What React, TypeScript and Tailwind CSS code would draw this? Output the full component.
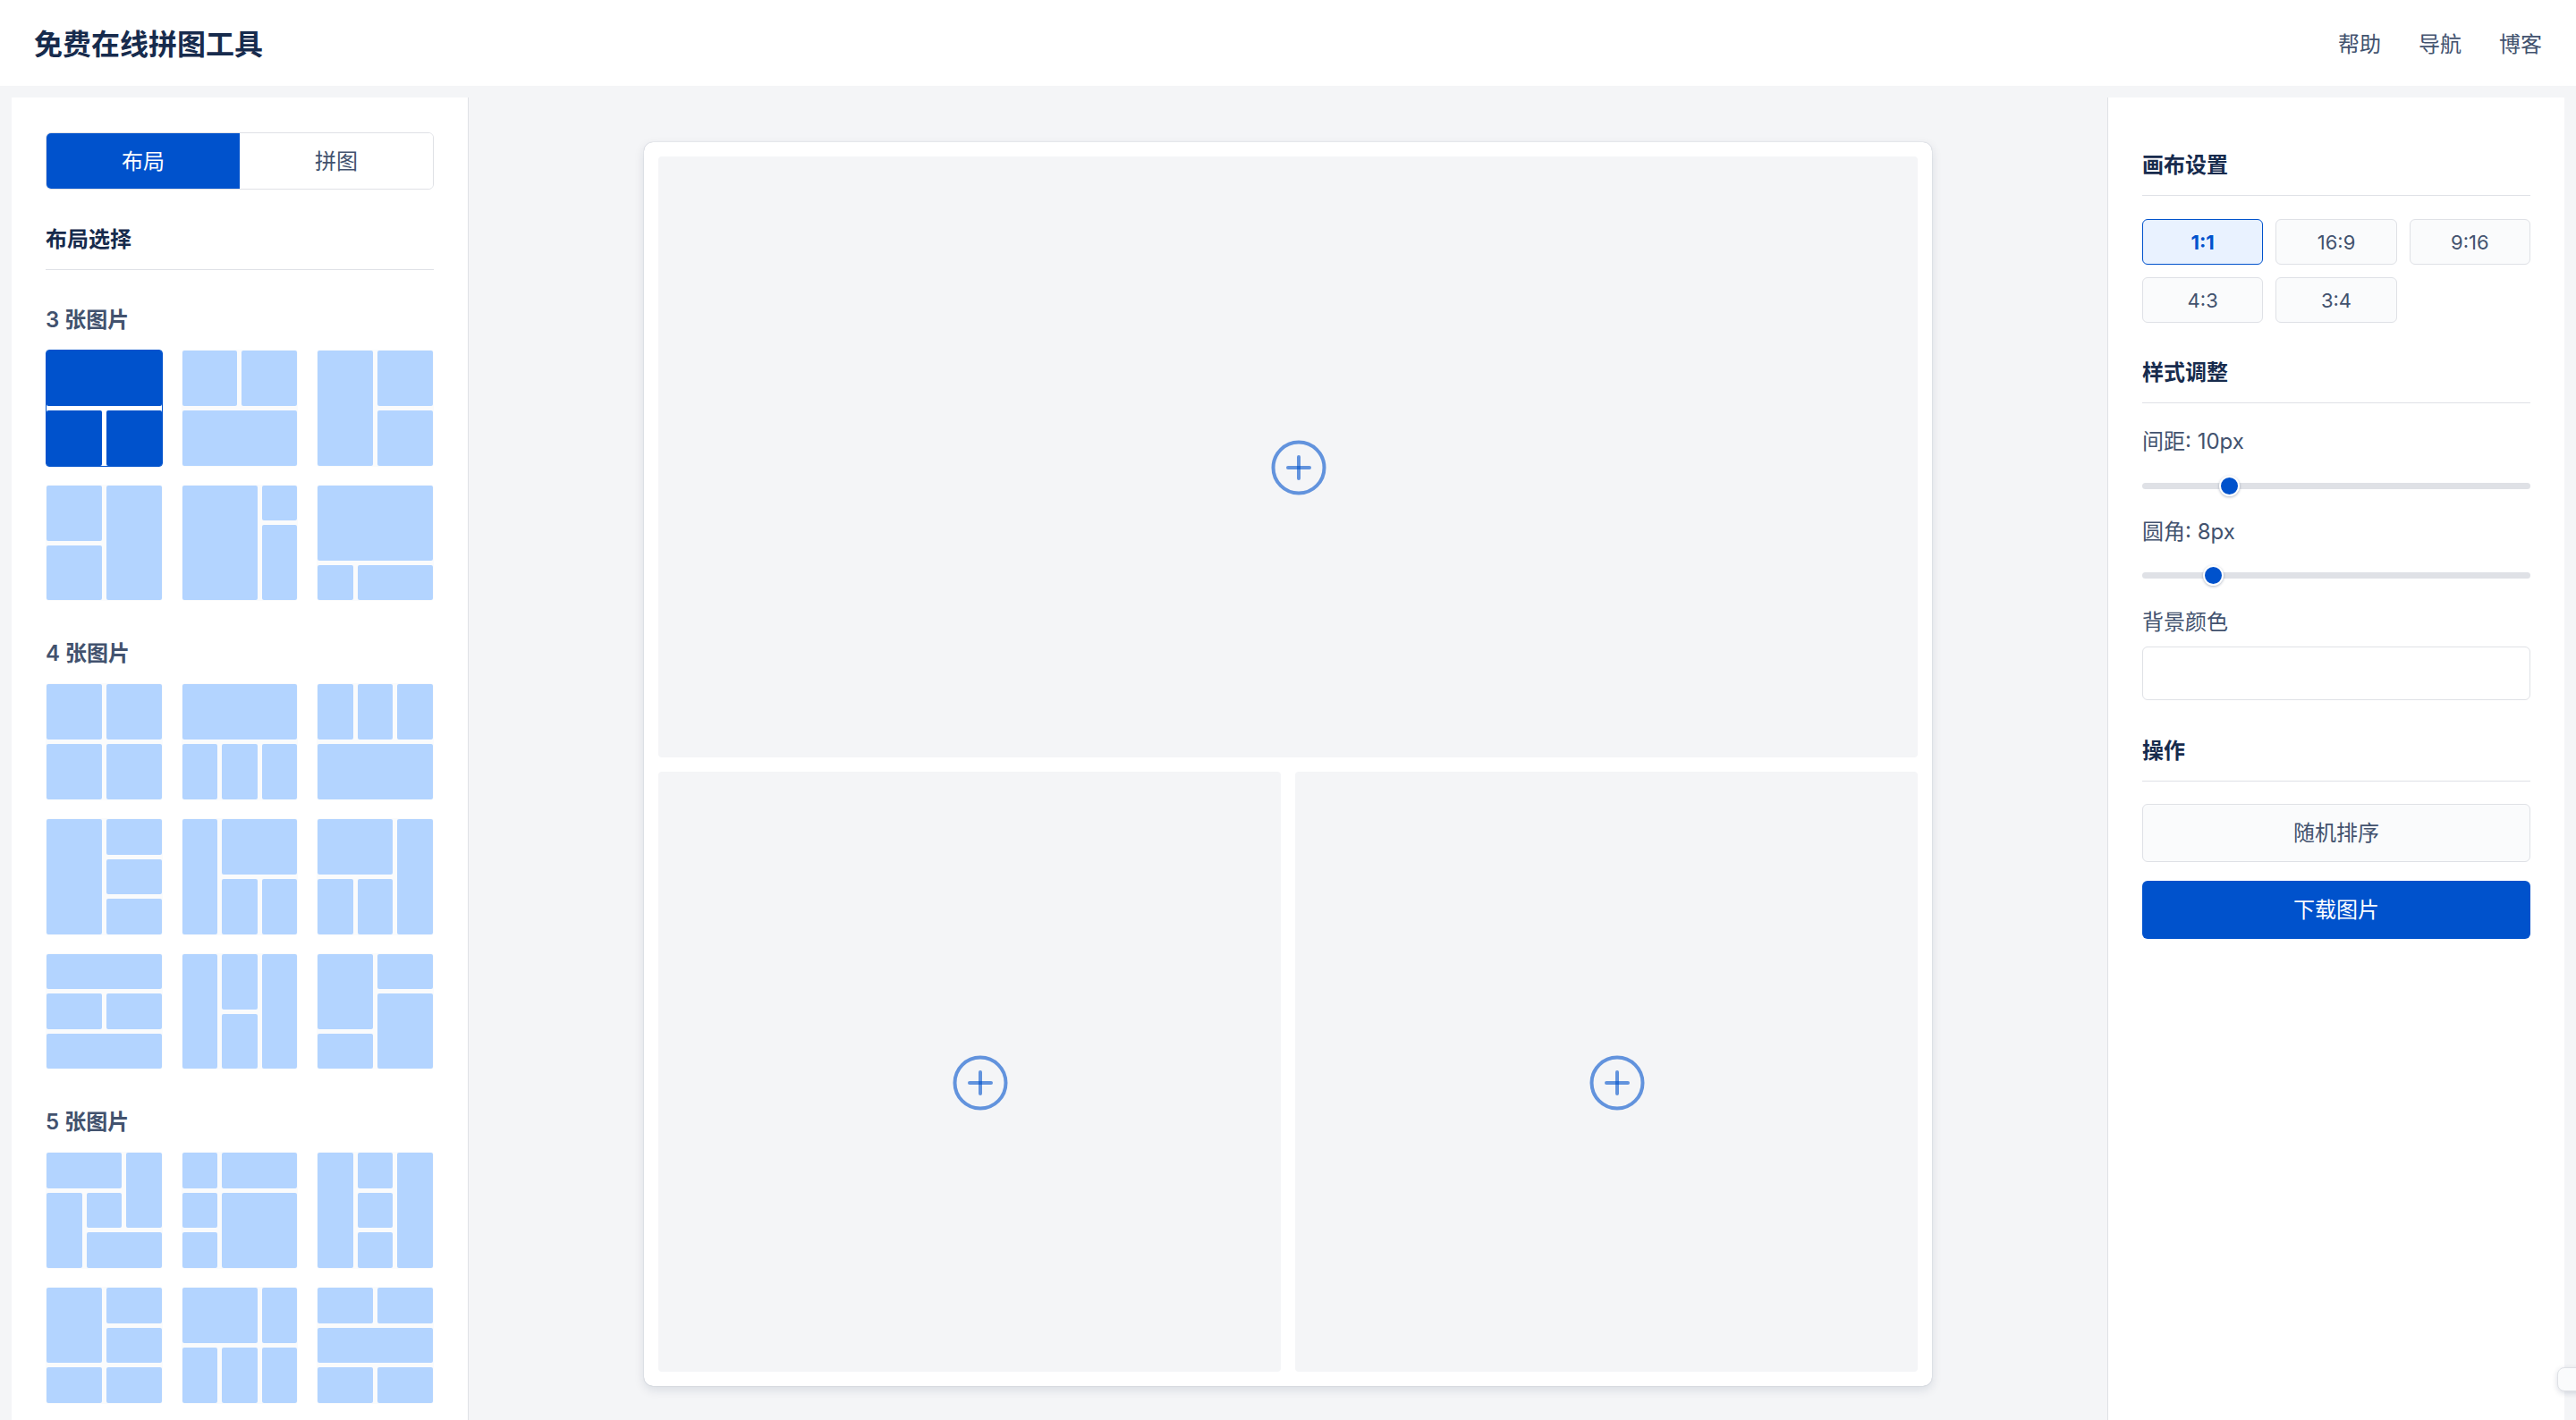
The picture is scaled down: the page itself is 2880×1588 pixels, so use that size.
import React from "react";

type Layout = { grid: string; cells: string[] };

const threeLayouts: Layout[] = [
  { grid: "grid-cols-2 grid-rows-2", cells: ["col-span-2", "", ""] },
  { grid: "grid-cols-2 grid-rows-2", cells: ["", "", "col-span-2"] },
  { grid: "grid-cols-2 grid-rows-2", cells: ["row-span-2", "", ""] },
  { grid: "grid-cols-2 grid-rows-2", cells: ["", "row-span-2", ""] },
  { grid: "grid-cols-3 grid-rows-3", cells: ["col-span-2 row-span-3", "", "row-span-2"] },
  { grid: "grid-cols-3 grid-rows-3", cells: ["col-span-3 row-span-2", "", "col-span-2"] },
];

const fourLayouts: Layout[] = [
  { grid: "grid-cols-2 grid-rows-2", cells: ["", "", "", ""] },
  { grid: "grid-cols-3 grid-rows-2", cells: ["col-span-3", "", "", ""] },
  { grid: "grid-cols-3 grid-rows-2", cells: ["", "", "", "col-span-3"] },
  { grid: "grid-cols-2 grid-rows-3", cells: ["row-span-3", "", "", ""] },
  { grid: "grid-cols-3 grid-rows-2", cells: ["row-span-2", "col-span-2", "", ""] },
  { grid: "grid-cols-3 grid-rows-2", cells: ["col-span-2", "row-span-2", "", ""] },
  { grid: "grid-cols-2 grid-rows-3", cells: ["col-span-2", "", "", "col-span-2"] },
  { grid: "grid-cols-3 grid-rows-2", cells: ["row-span-2", "", "row-span-2", ""] },
  { grid: "grid-cols-2 grid-rows-3", cells: ["row-span-2", "", "row-span-2", ""] },
];

const fiveLayouts: Layout[] = [
  { grid: "grid-cols-3 grid-rows-3", cells: ["col-span-2", "row-span-2", "row-span-2", "", "col-span-2"] },
  { grid: "grid-cols-3 grid-rows-3", cells: ["", "col-span-2", "", "col-span-2 row-span-2", ""] },
  { grid: "grid-cols-3 grid-rows-3", cells: ["row-span-3", "", "row-span-3", "", ""] },
  { grid: "grid-cols-2 grid-rows-3", cells: ["row-span-2", "", "", "", ""] },
  { grid: "grid-cols-3 grid-rows-2", cells: ["col-span-2", "", "", "", ""] },
  { grid: "grid-cols-2 grid-rows-3", cells: ["", "", "col-span-2", "", ""] },
];

function Thumb({ layout, active }: { layout: Layout; active?: boolean }) {
  return (
    <div
      className={
        "aspect-square grid gap-[5px] rounded-[4px] border " +
        layout.grid +
        (active ? " border-[#0052cc] bg-white" : " border-[#fafbfc] bg-[#fafbfc]")
      }
    >
      {layout.cells.map((c, i) => (
        <div
          key={i}
          className={
            "rounded-[2px] " + c + (active ? " bg-[#0052cc]" : " bg-[#b3d4ff]")
          }
        />
      ))}
    </div>
  );
}

function Section({ title, layouts, activeFirst, first }: { title: string; layouts: Layout[]; activeFirst?: boolean; first?: boolean }) {
  return (
    <div className={first ? "mt-[38px]" : "mt-[41px]"}>
      <div className="pt-[2px] text-[24px] leading-[32px] font-semibold text-[#42526e]">{title}</div>
      <div className="mt-[17px] grid grid-cols-3 gap-x-[21px] gap-y-[20px]">
        {layouts.map((l, i) => (
          <Thumb key={i} layout={l} active={activeFirst && i === 0} />
        ))}
      </div>
    </div>
  );
}

function PlusIcon() {
  return (
    <svg width="64" height="64" viewBox="0 0 64 64" fill="none">
      <g stroke="#0052cc" strokeOpacity="0.6" strokeWidth="4" strokeLinecap="round">
        <circle cx="32" cy="32" r="28.5" />
        <line x1="20" y1="32" x2="44" y2="32" />
        <line x1="32" y1="20" x2="32" y2="44" />
      </g>
    </svg>
  );
}

function Slot({ wide }: { wide?: boolean }) {
  return (
    <div
      className={
        "rounded-[4px] bg-[#f4f5f7] flex items-center justify-center pl-[24px] pt-[25px] " +
        (wide ? "col-span-2" : "")
      }
    >
      <PlusIcon />
    </div>
  );
}

function Slider({ value, max }: { value: number; max: number }) {
  const f = value / max;
  return (
    <div className="relative h-[24px] flex items-center">
      <div className="h-[7px] w-full rounded-full bg-[#dfe1e6]" />
      <div
        className="absolute top-[0.5px] w-[23px] h-[23px] rounded-full bg-[#0052cc] border-[2px] border-white shadow-[0_1px_3px_rgba(9,30,66,0.3)]"
        style={{ left: `calc((100% - 23px) * ${f})` }}
      />
    </div>
  );
}

function Heading({ children, className }: { children: React.ReactNode; className?: string }) {
  return (
    <div
      className={
        "text-[24px] leading-[32px] font-bold text-[#172b4d] pb-[17px] border-b border-[#dfe1e6] " +
        (className || "")
      }
    >
      {children}
    </div>
  );
}

export default function App() {
  const ratios = ["1:1", "16:9", "9:16", "4:3", "3:4"];
  return (
    <div className="relative h-[1588px] w-full overflow-hidden bg-[#f4f5f7] flex flex-col font-['Inter','Noto_Sans_CJK_SC',sans-serif]">
      <header className="h-[96px] shrink-0 bg-white flex items-center justify-between pl-[38px] pr-[38px] pt-[3px]">
        <h1 className="text-[32px] font-bold text-[#172b4d] leading-none">免费在线拼图工具</h1>
        <nav className="flex gap-[42px] text-[24px] text-[#42526e]">
          <span>帮助</span>
          <span>导航</span>
          <span>博客</span>
        </nav>
      </header>

      <div className="flex-1 min-h-0 flex px-[13px] pt-[13px]">
        {/* Left panel */}
        <aside className="w-[511px] shrink-0 bg-white border-r border-[#dfe1e6] px-[38px] pt-[39px] overflow-hidden">
          <div className="h-[64px] flex rounded-[6px] border border-[#dfe1e6] overflow-hidden text-[24px]">
            <div className="flex-1 flex items-center justify-center bg-[#0052cc] text-white pt-[2px]">布局</div>
            <div className="flex-1 flex items-center justify-center bg-white text-[#42526e] pt-[2px]">拼图</div>
          </div>
          <Heading className="mt-[40px]">布局选择</Heading>
          <Section title="3 张图片" layouts={threeLayouts} activeFirst first />
          <Section title="4 张图片" layouts={fourLayouts} />
          <Section title="5 张图片" layouts={fiveLayouts} />
        </aside>

        {/* Center canvas */}
        <main className="flex-1 min-w-0 flex justify-center pt-[50px]">
          <div className="w-[1440px] h-[1391px] bg-white rounded-[10px] p-[16px] shadow-[0_0_1px_rgba(9,30,66,0.35),0_4px_12px_rgba(9,30,66,0.12)]">
            <div className="w-full h-full grid grid-cols-2 grid-rows-2 gap-[16px]">
              <Slot wide />
              <Slot />
              <Slot />
            </div>
          </div>
        </main>

        {/* Right panel */}
        <aside className="w-[511px] shrink-0 bg-white border-l border-[#dfe1e6] px-[38px] pt-[60px] overflow-hidden">
          <Heading>画布设置</Heading>
          <div className="mt-[26px] grid grid-cols-3 gap-[14px]">
            {ratios.map((r, i) => (
              <div
                key={r}
                className={
                  "h-[51px] rounded-[6px] border flex items-center justify-center text-[22px] pt-[1px] " +
                  (i === 0
                    ? "bg-[#e9f2ff] border-[#0052cc] text-[#0052cc] font-bold"
                    : "bg-[#fafbfc] border-[#dfe1e6] text-[#42526e]")
                }
              >
                {r}
              </div>
            ))}
          </div>

          <Heading className="mt-[40px]">样式调整</Heading>
          <div className="mt-[27px] text-[24px] leading-[32px] text-[#42526e]">间距: 10px</div>
          <div className="mt-[21px]">
            <Slider value={10} max={48} />
          </div>
          <div className="mt-[24px] text-[24px] leading-[32px] text-[#42526e]">圆角: 8px</div>
          <div className="mt-[20px]">
            <Slider value={8} max={48} />
          </div>
          <div className="mt-[25px] text-[24px] leading-[32px] text-[#42526e]">背景颜色</div>
          <div className="mt-[11px] h-[60px] rounded-[6px] border border-[#dfe1e6] bg-white" />

          <Heading className="mt-[41px] pb-[16px]">操作</Heading>
          <div className="mt-[25px] h-[65px] rounded-[6px] border border-[#dfe1e6] bg-[#fafbfc] flex items-center justify-center text-[24px] text-[#42526e] pt-[1px]">
            随机排序
          </div>
          <div className="mt-[21px] h-[65px] rounded-[6px] bg-[#0052cc] flex items-center justify-center text-[24px] text-white pt-[1px]">
            下载图片
          </div>
        </aside>
      </div>

      <div className="absolute left-[2859px] top-[1529px] w-[40px] h-[27px] rounded-[8px] border border-[#dfe1e6] bg-[#fafbfc] shadow-[0_2px_6px_rgba(9,30,66,0.15)]" />
    </div>
  );
}
